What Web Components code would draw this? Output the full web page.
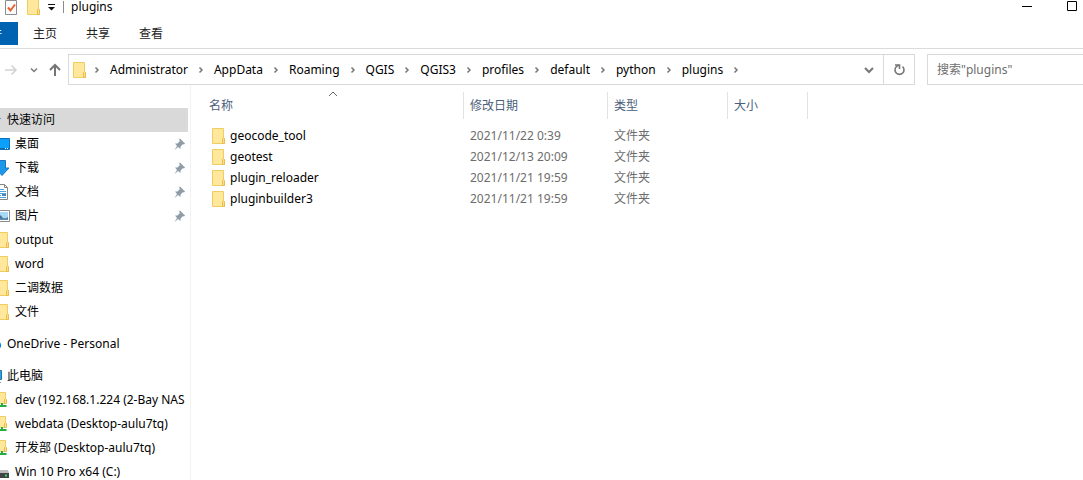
<!DOCTYPE html>
<html lang="zh-CN">
<head>
<meta charset="utf-8">
<title>plugins</title>
<style>
  html, body {
    height: 100%;
    margin: 0;
    overflow: hidden;
    background: #fff;
  }

  body {
    font: 12px/16px "Noto Sans", "Noto Sans CJK SC", sans-serif;
    color: #000;
  }
</style>
</head>
<body>
<explorer-window>
  <title-bar slot="title">plugins</title-bar>
  <ribbon-tabs slot="ribbon" tabs="文件,主页,共享,查看"></ribbon-tabs>
  <address-bar slot="address" path="Administrator/AppData/Roaming/QGIS/QGIS3/profiles/default/python/plugins"></address-bar>

  <nav-group slot="nav">
    <nav-item icon="star" root selected>快速访问</nav-item>
    <nav-item icon="desktop" pinned>桌面</nav-item>
    <nav-item icon="download" pinned>下载</nav-item>
    <nav-item icon="document" pinned>文档</nav-item>
    <nav-item icon="picture" pinned>图片</nav-item>
    <nav-item icon="folder">output</nav-item>
    <nav-item icon="folder">word</nav-item>
    <nav-item icon="folder">二调数据</nav-item>
    <nav-item icon="folder">文件</nav-item>
  </nav-group>
  <nav-group slot="nav">
    <nav-item icon="cloud" root>OneDrive - Personal</nav-item>
  </nav-group>
  <nav-group slot="nav">
    <nav-item icon="computer" root>此电脑</nav-item>
    <nav-item icon="share">dev (192.168.1.224 (2-Bay NAS</nav-item>
    <nav-item icon="share">webdata (Desktop-aulu7tq)</nav-item>
    <nav-item icon="share">开发部 (Desktop-aulu7tq)</nav-item>
    <nav-item icon="drive">Win 10 Pro x64 (C:)</nav-item>
  </nav-group>

  <file-list>
    <file-entry name="geocode_tool" modified="2021/11/22 0:39" type="文件夹"></file-entry>
    <file-entry name="geotest" modified="2021/12/13 20:09" type="文件夹"></file-entry>
    <file-entry name="plugin_reloader" modified="2021/11/21 19:59" type="文件夹"></file-entry>
    <file-entry name="pluginbuilder3" modified="2021/11/21 19:59" type="文件夹"></file-entry>
  </file-list>
</explorer-window>

<script>
{
  // every icon is drawn on a 16 x 16 grid
  const ICONS = {
    folder: `
      <path d="M2.5.5h11v11.5l1 .5v3h-12z" fill="#ffe79b" stroke="#f0cd61"/>
      <path d="M12.5 15.5v-5l1-1 1 1v5z" fill="#ffe08a" stroke="#e8bd4a"/>`,
    properties: `
      <path d="M2.5 1.5h11v14h-11z" fill="#fbfbfb" stroke="#8c8c8c"/>
      <path d="M5 8.5l2.5 3 4.5-6" fill="none" stroke="#e8612c" stroke-width="2"/>`,
    customize: `<path d="M5 5.5h7" stroke="#111"/><path d="M5 8h7l-3.5 3.5z" fill="#111"/>`,
    minimize: `<path d="M3 7.5h10" stroke="#000"/>`,
    maximize: `<path d="M3.5 2.5h9v9h-9z" fill="none" stroke="#000"/>`,
    forward: `<path d="M2 8h11M8.5 3.5L13 8l-4.5 4.5" fill="none" stroke="#d2d2d2" stroke-width="1.5"/>`,
    recent: `<path d="M6 6.5l3 3 3-3" fill="none" stroke="#7a7a7a" stroke-width="1.5"/>`,
    up: `<path d="M8 14V3M3 8l5-5 5 5" fill="none" stroke="#757575" stroke-width="2"/>`,
    crumb: `<path d="M6.5 5.5L9 8l-2.5 2.5" fill="none" stroke="#777" stroke-width="1.5"/>`,
    dropdown: `<path d="M4 6l4 4 4-4" fill="none" stroke="#777" stroke-width="2"/>`,
    refresh: `
      <path d="M11.5 4.5a4.5 4.5 0 1 1-6 0l2-1.5" fill="none" stroke="#777" stroke-width="1.6"/>
      <path d="M4 3h4.500v4" fill="none" stroke="#777" stroke-width="1.6"/>`,
    sort: `<path d="M4 10l4-4 4 4" fill="none" stroke="#6a6a6a"/>`,
    pin: `
      <path d="M8 4l4 4-1.500.5-2 2v2.500l-2.500-2L2.500 14l2.500-4-2-2.500h2.500l2-2z" fill="#8f9ca8"/>
      <path d="M7.500 3l5 5" stroke="#8f9ca8" stroke-width="1.500"/>`,
    star: `<path d="M8 1l2 5h5.500l-4 3.500L13 15l-5-3.500L3 15l1.500-5.500L.5 6H6z" fill="#3a95d6"/>`,
    desktop: `
      <path d="M.5 2.500h15v11H.5z" fill="#0aa0fb" stroke="#0a70b8"/>
      <path d="M1 12.500h14" stroke="#086cb5"/>
      <path d="M11 12.500h1M13 12.500h1" stroke="#fff"/>`,
    download: `<path d="M4.500.5h7V8h3.500l-7 7.500L1 8h3.500z" fill="#1c98ea" stroke="#1976bd"/>`,
    document: `
      <path d="M1.500.5h9l3 3v12h-12z" fill="#fff" stroke="#868686"/>
      <path d="M10.500.5v3h3" fill="none" stroke="#868686"/>
      <path d="M3 5.500h7M3 7.500h9M3 9.500h9M3 11.500h4M3 13.500h9" stroke="#4ba4df"/>
      <path d="M8 10h4v2H8z" fill="#4486bb"/>`,
    picture: `
      <path d="M.5 2.500h15v11H.5z" fill="#fff" stroke="#8d8d8d"/>
      <path d="M2 4h12v8H2z" fill="#a7d8f7"/>
      <path d="M2 8q4-2 6 1t6 0v3H2z" fill="#447391"/>
      <path d="M2 10.500h12V12H2z" fill="#5d8eb2"/>`,
    cloud: `<path d="M4 13a3.500 3.500 0 0 1 0-7 4.500 4.500 0 0 1 8-.5A4 4 0 0 1 13 13z" fill="#0a8ddd"/>`,
    computer: `
      <path d="M.5 2.500h15v9H.5z" fill="#1ba8f5" stroke="#34718f"/>
      <path d="M2 14.500h13" stroke="#8d9ca5"/>`,
    share: `
      <path d="M1.500.5h10v11h-10z" fill="#ffe79b" stroke="#f0cd61"/>
      <path d="M10.500 11.500v-4l1-1 1 1v4z" fill="#ffe08a" stroke="#e8bd4a"/>
      <path d="M8 11v3" stroke="#22ac43" stroke-width="2"/>
      <path d="M3 14h9.500" stroke="#22ac43" stroke-width="2"/>`,
    drive: `
      <path d="M2 6h12l1 3H1z" fill="#bcbcbc"/>
      <path d="M0 9h15v5H0z" fill="#414447"/>
      <path d="M11 11.500h2" stroke="#3be063" stroke-width="2"/>`,
  };

  const BUTTON_RESET = `
    button {
      padding: 0;
      border: 0;
      background: none;
      font: inherit;
      color: inherit;
      white-space: nowrap;
    }
  `;

  class BaseElement extends HTMLElement {
    constructor () {
      super();
      this.attachShadow({ mode: "open" });
    }

    /** @param {string} html */
    render (html) {
      const template = document.createElement("template");
      template.innerHTML = html;
      this.shadowRoot.replaceChildren(template.content.cloneNode(true));
    }
  }

  class UiIcon extends BaseElement {
    connectedCallback () {
      this.render(`
        <style>
          :host { display: block; flex: none; width: 16px; height: 16px; }
          svg { display: block; }
        </style>
        <svg width="16" height="16" viewBox="0 0 16 16" aria-hidden="true">${ICONS[this.getAttribute("name")]}</svg>
      `);
    }
  }

  class ExplorerWindow extends BaseElement {
    connectedCallback () {
      this.render(`
        <style>
          :host {
            display: flex;
            flex-direction: column;
            height: 100vh;
            overflow: hidden;
          }

          .body {
            display: flex;
            flex: 1;
            min-height: 0;
          }

          nav {
            display: flex;
            flex-direction: column;
            flex: none;
            gap: 8px;
            box-sizing: border-box;
            width: 191px;
            padding: 23px 2px 0 0;
            border-right: 1px solid #f2f2f2;
            overflow: hidden;
          }

          main { flex: 1; min-width: 0; }
        </style>
        <slot name="title"></slot>
        <slot name="ribbon"></slot>
        <slot name="address"></slot>
        <div class="body">
          <nav><slot name="nav"></slot></nav>
          <main><slot></slot></main>
        </div>
      `);
    }
  }

  class TitleBar extends BaseElement {
    connectedCallback () {
      this.render(`
        <style>
          ${BUTTON_RESET}
          :host {
            display: flex;
            flex: none;
            align-items: center;
            height: 30px;
            margin-top: -8px;
          }

          .tools {
            display: flex;
            align-items: center;
            padding-left: 3px;
          }

          .tools button + button { margin-left: 6px; }
          .tools button:last-child { margin-left: 2px; }

          .title {
            flex: 1;
            margin-left: 4px;
            padding-left: 7px;
            border-left: 1px solid #8a8a8a;
            line-height: 12px;
          }

          .window {
            display: flex;
            gap: 29px;
            padding-right: 3px;
          }
        </style>
        <div class="tools">
          <button aria-label="属性"><ui-icon name="properties"></ui-icon></button>
          <button aria-label="新建文件夹"><ui-icon name="folder"></ui-icon></button>
          <button aria-label="自定义快速访问工具栏"><ui-icon name="customize"></ui-icon></button>
        </div>
        <div class="title"><slot></slot></div>
        <div class="window">
          <button aria-label="最小化"><ui-icon name="minimize"></ui-icon></button>
          <button aria-label="最大化"><ui-icon name="maximize"></ui-icon></button>
        </div>
      `);
    }
  }

  class RibbonTabs extends BaseElement {
    connectedCallback () {
      const tabs = this.getAttribute("tabs").split(",");
      this.render(`
        <style>
          ${BUTTON_RESET}
          :host {
            display: flex;
            flex: none;
            gap: 1px;
            height: 26px;
            border-bottom: 1px solid #dadbdc;
          }

          button {
            flex: none;
            width: 52px;
            height: 23px;
            color: #222;
          }

          /* the file menu runs past the left edge of the window */
          button:first-of-type {
            width: 56px;
            margin-left: -38px;
            background: #0063b1;
            color: #fff;
          }
        </style>
        ${tabs.map((tab) => `<button>${tab}</button>`).join("")}
      `);
    }
  }

  class AddressBar extends BaseElement {
    connectedCallback () {
      const parts = this.getAttribute("path").split("/");
      const current = parts[parts.length - 1];
      this.render(`
        <style>
          ${BUTTON_RESET}
          :host {
            display: flex;
            flex: none;
            padding-top: 5px;
            height: 31px;
          }

          .history {
            display: flex;
            align-items: center;
            justify-content: space-between;
            flex: none;
            box-sizing: border-box;
            width: 68px;
            padding: 0 5px 0 3px;
          }

          .path {
            display: flex;
            align-items: center;
            flex: 1;
            min-width: 0;
            box-sizing: border-box;
            padding-left: 2px;
            border: 1px solid #d9d9d9;
          }

          .crumb {
            display: flex;
            align-items: center;
            justify-content: center;
            width: 26px;
          }

          ui-icon + .crumb {
            width: 23px;
            padding-right: 4px;
          }

          .dropdown { margin-left: auto; padding-right: 6px; }

          .refresh {
            display: flex;
            align-items: center;
            justify-content: center;
            align-self: stretch;
            width: 31px;
            border-left: 1px solid #d9d9d9;
          }

          input {
            flex: none;
            box-sizing: border-box;
            width: 156px;
            margin: 0 0 0 12px;
            padding: 0 9px;
            border: 1px solid #d9d9d9;
            border-right: 0;
            border-radius: 0;
            font: inherit;
            outline: none;
          }

          input::placeholder { color: #6d6d6d; opacity: 1; }
        </style>
        <div class="history">
          <button aria-label="前进" disabled><ui-icon name="forward"></ui-icon></button>
          <button aria-label="最近浏览的位置"><ui-icon name="recent"></ui-icon></button>
          <button aria-label="上移"><ui-icon name="up"></ui-icon></button>
        </div>
        <div class="path">
          <ui-icon name="folder"></ui-icon>
          <button class="crumb" aria-label="展开"><ui-icon name="crumb"></ui-icon></button>
          ${parts.map((part) => `
            <button>${part}</button>
            <button class="crumb" aria-label="展开 ${part}"><ui-icon name="crumb"></ui-icon></button>
          `).join("")}
          <button class="dropdown" aria-label="以前的位置"><ui-icon name="dropdown"></ui-icon></button>
          <button class="refresh" aria-label="刷新"><ui-icon name="refresh"></ui-icon></button>
        </div>
        <input type="text" aria-label="搜索" placeholder="搜索&quot;${current}&quot;">
      `);
    }
  }

  class NavGroup extends BaseElement {
    connectedCallback () {
      this.render(`
        <style>
          :host { display: block; flex: none; }
        </style>
        <slot></slot>
      `);
    }
  }

  class NavItem extends BaseElement {
    connectedCallback () {
      const pin = this.hasAttribute("pinned") ? `<ui-icon name="pin"></ui-icon>` : "";
      this.render(`
        <style>
          :host { display: block; overflow: hidden; }

          a {
            display: flex;
            align-items: center;
            gap: 5px;
            height: 24px;
            margin-left: -6px;
            color: inherit;
            text-decoration: none;
          }

          :host([root]) a { margin-left: -14px; }
          :host([selected]) { background: #d9d9d9; }

          span {
            flex: 1;
            overflow: hidden;
            white-space: nowrap;
          }
        </style>
        <a href="#">
          <ui-icon name="${this.getAttribute("icon")}"></ui-icon>
          <span><slot></slot></span>
          ${pin}
        </a>
      `);
    }
  }

  class FileEntry extends HTMLElement {}

  class FileList extends BaseElement {
    connectedCallback () {
      const rows = [...this.querySelectorAll("file-entry")].map((entry) => `
        <tr>
          <td><a href="#"><ui-icon name="folder"></ui-icon>${entry.getAttribute("name")}</a></td>
          <td>${entry.getAttribute("modified")}</td>
          <td>${entry.getAttribute("type")}</td>
          <td></td>
        </tr>
      `).join("");

      this.render(`
        <style>
          :host { display: block; padding: 7px 0 0 12px; }

          table {
            table-layout: fixed;
            width: 605px;
            border-collapse: separate;
            border-spacing: 0;
          }

          .name { width: 261px; }
          .modified { width: 144px; }
          .type { width: 120px; }
          .size { width: 80px; }

          th {
            position: relative;
            box-sizing: border-box;
            height: 27px;
            padding: 0 6px;
            border-right: 1px solid #e2e2e2;
            color: #4c607a;
            font-weight: normal;
            text-align: left;
          }

          th ui-icon {
            position: absolute;
            top: -6px;
            left: 50%;
            margin-left: -8px;
          }

          tbody::before {
            content: "";
            display: table-row;
            height: 6px;
          }

          td {
            height: 21px;
            padding: 0 6px;
            color: #6d6d6d;
            white-space: nowrap;
          }

          td:first-child { padding-left: 7px; }

          td a {
            display: flex;
            align-items: center;
            gap: 4px;
            color: #000;
            text-decoration: none;
          }
        </style>
        <table>
          <thead>
            <tr>
              <th class="name">名称<ui-icon name="sort"></ui-icon></th>
              <th class="modified">修改日期</th>
              <th class="type">类型</th>
              <th class="size">大小</th>
            </tr>
          </thead>
          <tbody>${rows}</tbody>
        </table>
      `);
    }
  }

  window.customElements.define("ui-icon", UiIcon);
  window.customElements.define("title-bar", TitleBar);
  window.customElements.define("ribbon-tabs", RibbonTabs);
  window.customElements.define("address-bar", AddressBar);
  window.customElements.define("nav-item", NavItem);
  window.customElements.define("nav-group", NavGroup);
  window.customElements.define("file-entry", FileEntry);
  window.customElements.define("file-list", FileList);
  window.customElements.define("explorer-window", ExplorerWindow);
}
</script>
</body>
</html>
